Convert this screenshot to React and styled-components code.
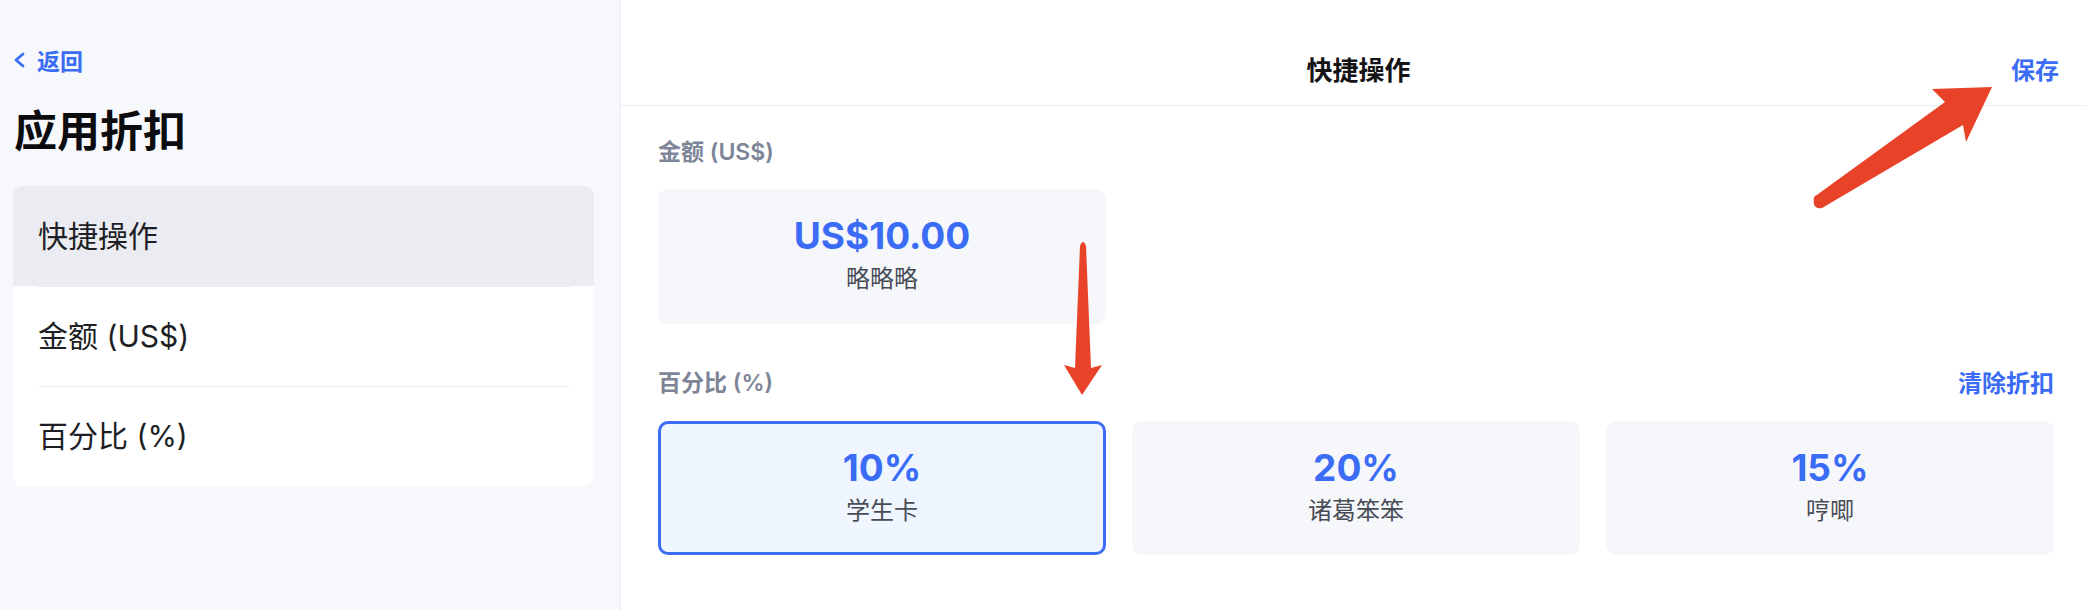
import styled, { createGlobalStyle } from "styled-components";

const GlobalStyle = createGlobalStyle`
  html, body {
    margin: 0;
    padding: 0;
    background: #ffffff;
  }
  body {
    font-family: Inter, "Noto Sans CJK SC", sans-serif;
  }
`;

const Page = styled.div`
  position: relative;
  display: flex;
  width: 100%;
  height: 100vh;
  min-height: 610px;
  overflow: hidden;
`;

const Sidebar = styled.aside`
  width: 621px;
  flex-shrink: 0;
  box-sizing: border-box;
  padding: 45px 26px 0 13px;
  background: #f7f8fc;
  border-right: 1px solid #e9eaef;
`;

const Back = styled.div`
  display: flex;
  align-items: center;
  gap: 11px;
  height: 30px;
  color: #3b6cf6;
  font-size: 23px;
  font-weight: 600;
`;

const Title = styled.h1`
  margin: 31px 0 0 1px;
  line-height: 50px;
  font-size: 43px;
  font-weight: 600;
  color: #0c0c0e;
`;

const Menu = styled.div`
  margin-top: 30px;
  background: #ffffff;
  border-radius: 9px;
  overflow: hidden;
`;

const MenuItem = styled.div`
  display: flex;
  align-items: center;
  box-sizing: border-box;
  height: 100px;
  padding: 0 0 5px 25px;
  font-size: 30px;
  color: #1d1f25;
  background: ${({ $active }) => ($active ? "#ebecf1" : "#ffffff")};

  & + & {
    border-top: ${({ $divider }) => ($divider ? "1px solid #ebecf0" : "none")};
    margin: 0 24px 0 25px;
    padding-left: 0;
  }
`;

const Main = styled.main`
  flex: 1;
  display: flex;
  flex-direction: column;
`;

const Header = styled.header`
  display: grid;
  grid-template-columns: 1fr auto 1fr;
  align-items: center;
  height: 73px;
  padding: 32px 27px 0 37px;
  border-bottom: 1px solid #ecedf0;
`;

const HeaderTitle = styled.div`
  font-size: 26px;
  font-weight: 700;
  color: #141416;
`;

const Save = styled.div`
  justify-self: end;
  font-size: 24px;
  font-weight: 600;
  color: #3b6cf6;
`;

const Content = styled.div`
  padding: 29px 32px 0 37px;
`;

const SectionHead = styled.div`
  display: flex;
  justify-content: space-between;
  align-items: center;
  height: 30px;
  margin-top: ${({ $first }) => ($first ? "0" : "42px")};
  margin-bottom: ${({ $first }) => ($first ? "24px" : "25px")};
`;

const Label = styled.div`
  font-size: 23px;
  font-weight: 600;
  color: #7d8597;
`;

const Clear = styled.div`
  font-size: 24px;
  font-weight: 600;
  color: #3b6cf6;
`;

const Grid = styled.div`
  display: grid;
  grid-template-columns: repeat(3, 1fr);
  gap: 26px;
`;

const Option = styled.div`
  box-sizing: border-box;
  height: ${({ $tall }) => ($tall ? "135px" : "134px")};
  padding-bottom: 5px;
  display: flex;
  flex-direction: column;
  align-items: center;
  justify-content: center;
  gap: 6px;
  border-radius: 10px;
  background: ${({ $selected }) => ($selected ? "#eff6ff" : "#f6f7fb")};
  border: 3px solid ${({ $selected }) => ($selected ? "#3d6df5" : "transparent")};
`;

const Value = styled.div`
  line-height: 44px;
  font-size: 37px;
  font-weight: 700;
  color: #3b6cf6;
`;

const Caption = styled.div`
  line-height: 30px;
  font-size: 24px;
  color: #484c57;
`;

const Overlay = styled.svg`
  position: absolute;
  top: 0;
  left: 0;
  pointer-events: none;
`;

const percents = [
  { value: "10%", name: "学生卡", selected: true },
  { value: "20%", name: "诸葛笨笨" },
  { value: "15%", name: "哼唧" },
];

const App = () => {
  return (
    <>
      <GlobalStyle />
      <Page>
        <Sidebar>
          <Back>
            <svg width="13" height="16" viewBox="0 0 13 16">
              <polyline
                points="10,2 3,8 10,14"
                fill="none"
                stroke="#3b6cf6"
                strokeWidth="2.8"
                strokeLinecap="round"
                strokeLinejoin="round"
              />
            </svg>
            返回
          </Back>
          <Title>应用折扣</Title>
          <Menu>
            <MenuItem $active>快捷操作</MenuItem>
            <MenuItem>金额 (US$)</MenuItem>
            <MenuItem $divider>百分比 (%)</MenuItem>
          </Menu>
        </Sidebar>

        <Main>
          <Header>
            <span />
            <HeaderTitle>快捷操作</HeaderTitle>
            <Save>保存</Save>
          </Header>

          <Content>
            <SectionHead $first>
              <Label>金额 (US$)</Label>
            </SectionHead>
            <Grid>
              <Option $tall>
                <Value>US$10.00</Value>
                <Caption>略略略</Caption>
              </Option>
            </Grid>

            <SectionHead>
              <Label>百分比 (%)</Label>
              <Clear>清除折扣</Clear>
            </SectionHead>
            <Grid>
              {percents.map((p) => (
                <Option key={p.value} $selected={p.selected}>
                  <Value>{p.value}</Value>
                  <Caption>{p.name}</Caption>
                </Option>
              ))}
            </Grid>
          </Content>
        </Main>

        <Overlay width="2086" height="610" viewBox="0 0 2086 610">
          <path
            d="M1814 197 L1945 102 L1932 89 L1992 87 L1966 142 L1963 125 L1822 208 Q1812 210 1814 197 Z"
            fill="#e84329"
          />
          <path
            d="M1080 246 Q1083 238 1086 246 L1091 368 L1102 365 L1082 395 L1064 365 L1075 368 Z"
            fill="#e84329"
          />
        </Overlay>
      </Page>
    </>
  );
};

export default App;
